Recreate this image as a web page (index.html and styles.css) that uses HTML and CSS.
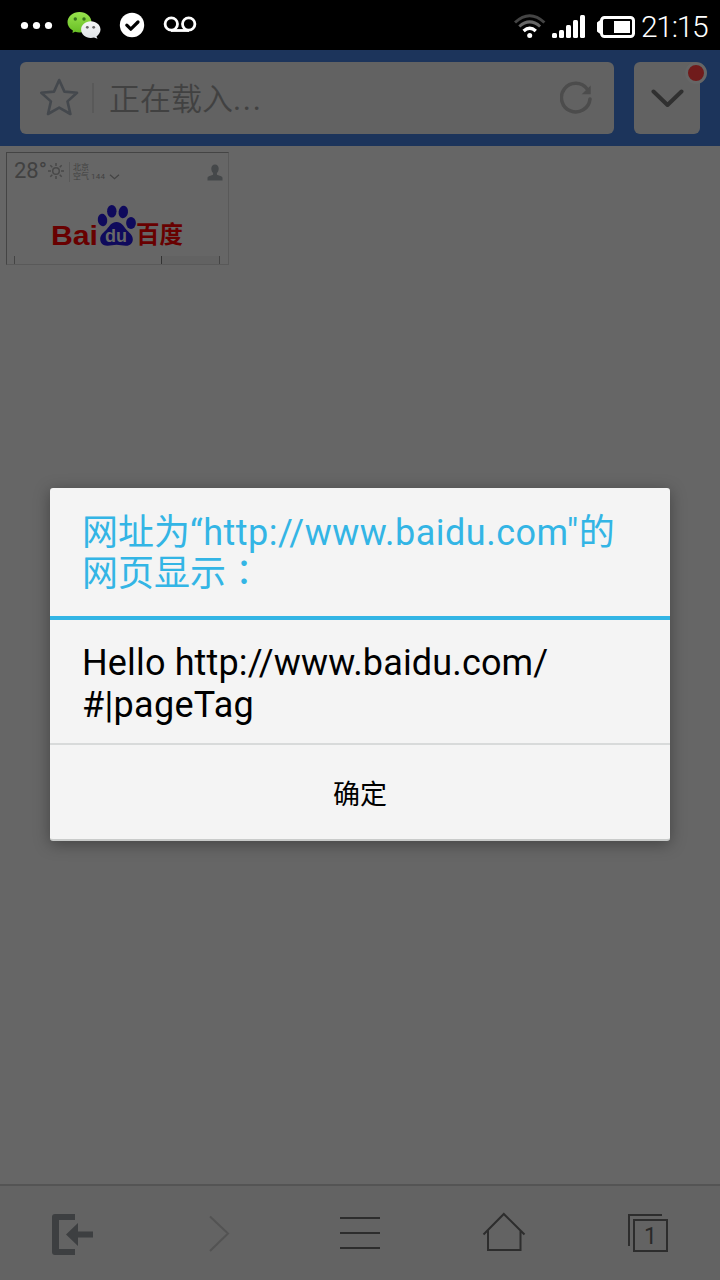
FILE: index.html
```html
<!DOCTYPE html>
<html lang="zh-CN">
<head>
<meta charset="utf-8">
<title>浏览器</title>
<link rel="stylesheet" href="styles.css">
</head>
<body>
<div class="screen">
  <header class="status">
    <svg class="notifications" width="200" height="50" viewBox="0 0 200 50">
      <defs>
        <linearGradient id="green" x1="0" y1="0" x2="0" y2="1"><stop offset="0" stop-color="#98e34d"/><stop offset="1" stop-color="#67be24"/></linearGradient>
        <linearGradient id="silver" x1="0" y1="0" x2="0" y2="1"><stop offset="0" stop-color="#f6f7f8"/><stop offset="1" stop-color="#dfe3e6"/></linearGradient>
      </defs>
      <g fill="#fff"><circle cx="24.500" cy="25.500" r="3.600"/><circle cx="36.500" cy="25.500" r="3.600"/><circle cx="48.500" cy="25.500" r="3.600"/></g>
      <path fill="url(#green)" d="M79.500 12c6.700 0 12 4.600 12 10.200s-5.300 10.200-12 10.200c-1.500 0-3-.2-4.400-.6L72.500 33l.4-2.600c-3.300-1.800-5.400-4.800-5.400-8.200C67.500 16.600 72.800 12 79.500 12z"/>
      <path fill="url(#silver)" d="M90.800 21.300c5.400 0 9.700 3.600 9.700 8.300 0 2.800-1.600 5.200-4 6.800l1 2.400-3.500-1.300c-1 .3-2 .4-3.200.4-5.400 0-9.700-3.700-9.700-8.300s4.300-8.300 9.700-8.300z"/>
      <g fill="#36721b"><circle cx="75.300" cy="19" r="1.700"/><circle cx="84" cy="19" r="1.700"/></g>
      <g fill="#666"><circle cx="87.300" cy="27.300" r="1.400"/><circle cx="93.700" cy="27.300" r="1.400"/></g>
      <circle cx="132" cy="25" r="12.200" fill="#fff"/>
      <path d="M126.800 25.200l4 4L138 22" fill="none" stroke="#000" stroke-width="3.200" stroke-linecap="round" stroke-linejoin="round"/>
      <g fill="none" stroke="#fff" stroke-width="2.800"><circle cx="171.300" cy="24" r="6.200"/><circle cx="188.700" cy="24" r="6.200"/><path d="M171 30.500h18"/></g>
    </svg>
    <div class="indicators">
      <svg width="122" height="50" viewBox="514 0 122 50">
        <g fill="none" stroke-width="3"><path stroke="#444" d="M515 22.500q14.700-13.500 29.400 0"/><path stroke="#666" d="M519.300 26.500q10.400-9.300 20.800 0"/><path stroke="#fff" stroke-width="3.300" d="M523.600 31q6.100-5.600 12.200 0"/></g>
        <circle cx="529.700" cy="35.500" r="2.500" fill="#fff"/>
        <g fill="#fff"><rect x="552" y="33" width="5" height="5" rx="1.500"/><rect x="559" y="30" width="5" height="8" rx="1.500"/><rect x="566" y="25" width="5" height="13" rx="1.500"/><rect x="573" y="20" width="5" height="18" rx="1.500"/><rect x="580" y="15" width="5" height="23" rx="1.500"/></g>
        <rect x="601.500" y="17.500" width="32" height="19" rx="3" fill="none" stroke="#fff" stroke-width="3"/>
        <path fill="#fff" d="M601 20.500h-1.500l-2.500 2v9l2.500 2h1.500zM614 21h16v12h-16z"/>
      </svg>
      <span class="clock">21:15</span>
    </div>
  </header>
  <div class="toolbar">
    <div class="address">
      <svg class="star" width="40" height="40" viewBox="0 0 40 40"><path d="M19.200 2L24.400 13.600 37 14.800 27.500 23.400 30.400 36 19.200 29.600 8 36 10.900 23.400 1.300 14.800 14 13.600z"/></svg>
      <span class="separator"></span>
      <span class="loading">正在载入<span class="dots">...</span></span>
      <svg class="reload" width="34" height="34" viewBox="560 80 34 34"><path class="arc" d="M587.300 88.200A14.300 14.300 0 1 0 590 98"/><path class="tip" d="M590.700 84.500v8.700h-9z"/></svg>
    </div>
    <div class="more">
      <svg width="34" height="22" viewBox="0 0 34 22"><path d="M3.500 4.500L17.500 18 31.500 4.500"/></svg>
      <span class="badge"></span>
    </div>
  </div>
  <main class="page">
    <section class="tile">
      <div class="weather">
        <span class="temp">28°</span>
        <svg class="sun" width="18" height="18" viewBox="0 0 18 18"><circle cx="9" cy="9" r="3.300"/><path d="M9 1v3M9 14v3M1 9h3M14 9h3M3.300 3.300l2 2M12.700 12.700l2 2M3.300 14.700l2-2M12.700 5.300l2-2"/></svg>
        <div class="city"><span>北京</span><span class="air">空气 <b>144</b> <svg width="11" height="6" viewBox="0 0 11 6"><path d="M1 .7l4.500 4 4.500-4"/></svg></span></div>
        <svg class="user" width="16" height="17" viewBox="0 0 16 17"><path d="M8 .5c2.300 0 3.700 1.700 3.700 4 0 2-.8 3.600-1.800 4.600v1.700l4.200 1.500c1 .5 1.400 1 1.400 1.900v2.300H.5v-2.300c0-.9.400-1.400 1.400-1.900l4.200-1.500V9.100C5.100 8.100 4.300 6.500 4.300 4.500c0-2.300 1.400-4 3.700-4z"/></svg>
      </div>
      <svg class="logo" width="142" height="54" viewBox="47 198 142 54">
        <g fill="#0f0a5c"><ellipse cx="102.500" cy="220" rx="4.700" ry="6.300" transform="rotate(-8 102.500 220)"/><ellipse cx="111.800" cy="211.300" rx="4.700" ry="6.300"/><ellipse cx="123.300" cy="212" rx="4.700" ry="6.300" transform="rotate(8 123.300 212)"/><ellipse cx="131" cy="223" rx="4.900" ry="6"/><path d="M116.500 222c5 0 7 4 9.500 7.200 2.800 3.400 6.800 5.400 6.800 10.100 0 4.200-3 6.700-7 6.500-3.600-.2-5.800-1-9.300-1s-5.400.9-9 1c-4.300.1-7.300-2.300-7.300-6.700 0-4.600 4-6.700 6.800-10 2.600-3.200 4.500-7.100 9.500-7.100z"/></g>
        <text class="latin" x="51" y="244.500" textLength="47" lengthAdjust="spacingAndGlyphs">Bai</text>
        <text class="du" x="105" y="242" textLength="22" lengthAdjust="spacingAndGlyphs">du</text>
        <text class="hanzi" x="136" y="243" textLength="47" lengthAdjust="spacingAndGlyphs">百度</text>
      </svg>
      <div class="search"><span></span></div>
    </section>
  </main>
  <nav class="bottom">
    <svg viewBox="0 0 144 96"><path fill="#3d3f41" d="M55 30h20v6H59v29h16v6H55q-3 0-3-3V33q0-3 3-3zM66 50.500L78 39v8.500h15v6H78V62z"/></svg>
    <svg viewBox="144 0 144 96"><path class="thin" stroke="#535353" d="M210 32.500L228 49.500 210 67"/></svg>
    <svg viewBox="288 0 144 96"><path class="line" d="M340 34h40M340 49h40M340 64h40"/></svg>
    <svg viewBox="432 0 144 96"><path class="line" d="M483.500 50.500L503.800 30l20.700 20.500M488 46v20h32.500V46"/></svg>
    <svg viewBox="576 0 144 96"><path class="line" d="M629 62V31h33M634 36h33v31h-33z"/><text class="count" x="644" y="60">1</text></svg>
  </nav>
  <div class="dialog" role="alertdialog">
    <h1 class="title"><span>网址为<span class="url">“http://www.baidu.com"</span>的</span><span>网页显示<span class="colon" lang="zh-TW">：</span></span></h1>
    <p class="message"><span>Hello http://www.baidu.com/</span><span class="tag">#|pageTag</span></p>
    <button class="confirm">确定</button>
  </div>
</div>
</body>
</html>
```

FILE: styles.css
```css
* { box-sizing: border-box; }
body { margin: 0; background: #666; font-family: Roboto, "Noto Sans CJK SC", sans-serif; }
svg { display: block; }
.screen { position: relative; width: 720px; height: 1280px; display: flex; flex-direction: column; overflow: hidden; background: #656565; }

.status { height: 50px; flex: none; display: flex; justify-content: space-between; background: #000; color: #fff; }
.indicators { display: flex; padding-right: 12px; gap: 5px; }
.clock { width: 67px; font-size: 30px; font-weight: 300; line-height: 54px; letter-spacing: -1.3px; white-space: nowrap; }

.toolbar { height: 96px; flex: none; display: flex; gap: 20px; padding: 12px 20px; background: #1c345b; }
.address { flex: 1; display: flex; align-items: center; padding: 0 20px; border-radius: 6px; background: #626262; }
.star { fill: none; stroke: #44484d; stroke-width: 2.6; stroke-linejoin: round; }
.separator { width: 2px; height: 30px; margin: 0 15px 0 12px; background: #595959; }
.loading { flex: 1; padding-top: 3px; color: #414141; font-size: 31px; font-weight: 350; line-height: 69px; }
.dots { font-weight: 400; letter-spacing: 1.7px; }
.reload .arc { fill: none; stroke: #4c4c4c; stroke-width: 3.5; stroke-linecap: round; }
.reload .tip { fill: #4c4c4c; }
.more { position: relative; width: 66px; display: flex; align-items: center; justify-content: center; border-radius: 6px; background: #626262; }
.more svg path { fill: none; stroke: #303030; stroke-width: 4; stroke-linecap: round; stroke-linejoin: round; }
.badge { position: absolute; top: 0; right: -7px; width: 22px; height: 22px; border: 3px solid #666; border-radius: 50%; background: #701b1b; }

.page { flex: 1; padding: 6px; background: #666; }
.tile { width: 223px; height: 113px; display: flex; flex-direction: column; border: 1px solid #595959; border-top-color: #444; border-left-color: #444; }
.weather { display: flex; height: 52px; flex: none; padding: 6px 5px 0 7px; color: #414141; }
.temp { width: 33px; font-size: 22px; line-height: 23px; }
.sun { margin-top: 3px; fill: none; stroke: #484848; stroke-width: 1.5; }
.city { display: flex; flex-direction: column; flex: 1; height: 20px; margin: 3px 0 0 4px; padding: 1px 0 0 3px; border-left: 1px solid #595959; font-size: 8px; line-height: 9px; white-space: nowrap; }
.air { display: flex; align-items: center; gap: 2px; }
.air b { font-weight: 400; letter-spacing: .3px; }
.air svg { margin-left: 2px; fill: none; stroke: #444; stroke-width: 1.2; }
.user { margin-top: 5px; fill: #45484a; }
.logo { margin: -7px 0 0 40px; flex: none; }
.latin { font: bold 28px "Liberation Sans", sans-serif; fill: #680000; }
.du { font: bold 19px "Liberation Sans", sans-serif; fill: #686868; }
.hanzi { font: bold 24px "Noto Sans CJK SC", sans-serif; fill: #680000; }
.search { height: 8px; margin: auto 8px 0 7px; border: solid #444; border-width: 0 1px; display: flex; justify-content: flex-end; }
.search span { width: 58px; border-left: 1px solid #333; background: #626262; }

.bottom { height: 96px; flex: none; display: grid; grid-template-columns: repeat(5, 1fr); border-top: 2px solid #545454; background: #636363; }
.bottom svg { width: 144px; height: 96px; margin-top: -2px; }
.line { fill: none; stroke: #2d2d2d; stroke-width: 2; }
.thin { fill: none; stroke-width: 2; }
.count { font-size: 23px; font-weight: 400; fill: #292929; }

.dialog { position: absolute; left: 50px; top: 488px; width: 620px; height: 353px; display: flex; flex-direction: column; border-radius: 3px; background: #f4f4f4; box-shadow: 0 3px 16px rgba(0, 0, 0, .35); border-bottom: 2px solid #c9cbca; }
.title, .message { display: flex; flex-direction: column; margin: 0; font-size: 36px; font-weight: 400; line-height: 42px; white-space: nowrap; }
.title { height: 132px; padding: 25px 32px 0; line-height: 41px; border-bottom: 4px solid #33b5e5; color: #33b5e5; }
.url { letter-spacing: .48px; }
.colon { font-family: "Noto Sans CJK TC", sans-serif; line-height: 1px; }
.message { height: 123px; padding: 22px 32px 0; color: #000; letter-spacing: .15px; }
.tag { letter-spacing: .3px; }
.confirm { flex: 1; padding: 2px 0 0; border: 0; border-top: 2px solid #d8dada; background: none; color: #000; font: 27px/92px "Noto Sans CJK SC", sans-serif; }
```
